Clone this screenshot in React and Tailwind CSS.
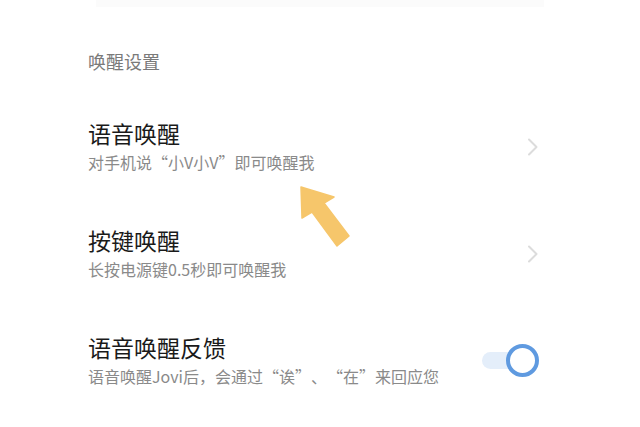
import React from 'react';

const font = { fontFamily: '"Noto Sans CJK SC", "Noto Sans", sans-serif' };

// full-width CJK punctuation
function P({ children }) {
  return <span className="[font-feature-settings:'fwid'] [text-spacing-trim:space-all]">{children}</span>;
}

function Chevron() {
  return (
    <svg width="12" height="18" viewBox="0 0 12 18" className="shrink-0">
      <path d="M2 1.5 L9.5 9 L2 16.5" fill="none" stroke="#dcdcdc" strokeWidth="2" strokeLinecap="round" strokeLinejoin="round" />
    </svg>
  );
}

function Toggle() {
  return (
    <div className="relative w-[57px] h-[33px] shrink-0">
      <div className="absolute left-0 top-[8px] w-[40px] h-[17px] rounded-l-full bg-[#e4eefa]" />
      <div className="absolute right-0 top-0 w-[33px] h-[33px] rounded-full border-[4px] border-[#5f9ae0] bg-white" />
    </div>
  );
}

function Row({ title, desc, right }) {
  return (
    <div className="flex items-center justify-between">
      <div className="flex flex-col gap-[5px]">
        <div className="text-[23px] leading-[27px] text-[#1a1a1a]">{title}</div>
        <div className="text-[16px] leading-[21px] text-[#8a8a8a] [text-spacing-trim:space-all]">{desc}</div>
      </div>
      {right}
    </div>
  );
}

export default function App() {
  return (
    <div className="relative w-[640px] h-[427px] bg-white overflow-hidden" style={font}>
      <div className="mx-[96px] h-[7px] bg-[#fbfbfb]" />

      <div className="pl-[88px] pr-[101px] pt-[42px]">
        <div className="text-[18px] leading-[25px] text-[#7a7a7a]">唤醒设置</div>

        <div className="mt-[46px] flex flex-col gap-[54px]">
          <Row
            title="语音唤醒"
            desc={<>对手机说<P>“</P>小V小V<P>”</P>即可唤醒我</>}
            right={<Chevron />}
          />
          <Row
            title="按键唤醒"
            desc="长按电源键0.5秒即可唤醒我"
            right={<Chevron />}
          />
          <Row
            title="语音唤醒反馈"
            desc={<>语音唤醒Jovi后<P>，</P>会通过<P>“</P>诶<P>”</P><P>、</P><P>“</P>在<P>”</P>来回应您</>}
            right={<Toggle />}
          />
        </div>
      </div>

      {/* pointer arrow */}
      <svg className="absolute left-0 top-0" width="640" height="427" viewBox="0 0 640 427">
        <polygon
          points="301,187 334,197 324,203 349,236 337,246 312,212 302,218"
          fill="#f6c66b"
          stroke="#f6c66b"
          strokeWidth="1.5"
          strokeLinejoin="round"
        />
      </svg>
    </div>
  );
}
